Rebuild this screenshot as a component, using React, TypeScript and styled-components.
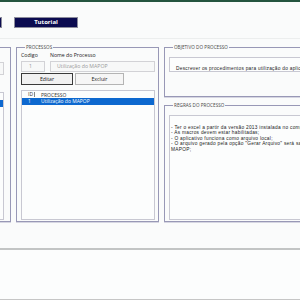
import React from 'react'
import styled, { createGlobalStyle } from 'styled-components'

const GlobalStyle = createGlobalStyle`
    html, body {
        margin: 0;
        padding: 0;
        background: #fafbfb;
    }
    body {
        font-family: "Open Sans", "Noto Sans", sans-serif;
        color: #222;
    }
`

const Page = styled.div`
    width: 300px;
    height: 300px;
    overflow: hidden;
    display: grid;
    grid-template-rows: 2px 37px 211px 50px;
    background: #fafbfb;
`

const TopLine = styled.div`
    background: #24543f;
`

const Header = styled.div`
    display: flex;
    align-items: flex-start;
    gap: 12px;
    padding-top: 15px;
    box-sizing: border-box;
    border-bottom: 1px solid #eceeee;
`

const NavButton = styled.button<{ $cut?: boolean }>`
    width: 64px;
    height: 11px;
    margin-left: ${p => (p.$cut ? '-62px' : '0')};
    padding: 0;
    border: 1px solid #8c8c9c;
    background: #0b0b50;
    color: #fff;
    font-family: "Open Sans", sans-serif;
    font-weight: 700;
    font-size: 6px;
    line-height: 9px;
    text-align: center;
`

const Content = styled.div`
    display: flex;
    align-items: stretch;
    gap: 5px;
    padding: 6px 0 26px 0;
    box-sizing: border-box;
    border-bottom: 2px solid #c2c4c4;
    min-height: 0;
`

const Group = styled.fieldset<{ $w: number }>`
    margin: 0;
    padding: 1px 3px 1px 4px;
    width: ${p => p.$w}px;
    flex-shrink: 0;
    box-sizing: border-box;
    border: 1px solid #9898b6;
    box-shadow: 0 1px 0 #d6d6e2;
    display: flex;
    flex-direction: column;
    min-width: 0;
`

const Legend = styled.legend`
    font-size: 4.6px;
    line-height: 5px;
    padding: 0 1px;
    margin-left: 4px;
    color: #444;
    letter-spacing: 0.05px;
`

const LeftGroup = styled(Group)`
    margin-left: -49px;
`

const LabelRow = styled.div`
    display: flex;
    gap: 5px;
    height: 8px;
    align-items: center;
    font-size: 5.2px;
`

const Label = styled.span<{ $w: number }>`
    width: ${p => p.$w}px;
`

const InputRow = styled.div`
    display: flex;
    gap: 5px;
    margin-top: 2px;
`

const Input = styled.div<{ $w?: number; $center?: boolean }>`
    width: ${p => (p.$w ? `${p.$w}px` : 'auto')};
    flex: ${p => (p.$w ? '0 0 auto' : '1')};
    height: 11px;
    box-sizing: border-box;
    border: 1px solid #d2d2d6;
    background: #f7f8f8;
    color: #9a9a9a;
    font-size: 5.2px;
    line-height: 9px;
    padding-left: ${p => (p.$center ? '7px' : '6px')};
    white-space: nowrap;
    overflow: hidden;
`

const ButtonRow = styled.div`
    display: flex;
    gap: 2px;
    margin-top: 1px;
`

const ActionButton = styled.button<{ $w: number; $default?: boolean }>`
    width: ${p => p.$w}px;
    height: 12px;
    padding: 0;
    box-sizing: border-box;
    border: 1px solid ${p => (p.$default ? '#3a3a3a' : '#b4b4b4')};
    background: ${p => (p.$default ? '#f1f1f1' : '#f6f6f6')};
    color: #222;
    font-family: "Open Sans", sans-serif;
    font-size: 5.2px;
    line-height: 10px;
`

const List = styled.div<{ $gapTop?: number; $right?: number }>`
    flex: 1;
    margin-top: ${p => p.$gapTop ?? 5}px;
    margin-right: ${p => p.$right ?? 0}px;
    border: 1px solid #c8c8d2;
    background: #fcfdfd;
    display: flex;
    flex-direction: column;
    overflow: hidden;
`

const ListRow = styled.div<{ $selected?: boolean }>`
    display: flex;
    height: ${p => (p.$selected ? '6.5px' : '7px')};
    align-items: center;
    font-size: 5px;
    white-space: nowrap;
    background: ${p => (p.$selected ? '#0d68cf' : 'transparent')};
    color: ${p => (p.$selected ? '#fff' : '#333')};
`

const IdCell = styled.span<{ $head?: boolean }>`
    width: 13px;
    padding-left: 6px;
    flex-shrink: 0;
    box-sizing: border-box;
    height: ${p => (p.$head ? '5px' : 'auto')};
    line-height: ${p => (p.$head ? '5px' : 'normal')};
    border-right: ${p => (p.$head ? '1px solid #888' : '0')};
`

const NameCell = styled.span`
    padding-left: 6px;
`

const LeftInput = styled.div`
    height: 11px;
    margin-top: 11px;
    margin-right: 3px;
    border: 1px solid #d2d2d6;
    background: #f7f8f8;
`

const RightColumn = styled.div`
    width: 180px;
    flex-shrink: 0;
    display: flex;
    flex-direction: column;
    gap: 6px;
`

const TextBox = styled.div<{ $pad: string }>`
    flex: 1;
    margin-top: 6px;
    border: 1px solid #c8c8d2;
    background: #fcfdfd;
    padding: ${p => p.$pad};
    font-family: "Liberation Sans", Arial, sans-serif;
    font-size: 4.8px;
    letter-spacing: 0.27px;
    line-height: 5.4px;
    color: #222;
    overflow: hidden;
`

const Line = styled.div`
    white-space: nowrap;
`

const Footer = styled.div`
    border-bottom: 1px solid #c6c6c6;
    background: #fcfdfd;
`

const rules = [
    '- Ter o excel a partir da versão 2013 instalada no computador;',
    '- As macros devem estar habilitadas;',
    '- O aplicativo funciona como arquivo local;',
    '- O arquivo gerado pela opção "Gerar Arquivo" será salvo na pasta do',
    'MAPOP;',
]

const App: React.FC = () => {
    return (
        <Page>
            <GlobalStyle />
            <TopLine />
            <Header>
                <NavButton $cut aria-label="Início" />
                <NavButton>Tutorial</NavButton>
            </Header>
            <Content>
                <LeftGroup $w={60}>
                    <Legend>&nbsp;</Legend>
                    <LeftInput />
                    <List $gapTop={17} $right={3}>
                        <ListRow />
                        <ListRow $selected />
                    </List>
                </LeftGroup>
                <Group $w={143}>
                    <Legend>PROCESSOS</Legend>
                    <LabelRow>
                        <Label $w={24}>Codigo</Label>
                        <Label $w={100}>Nome do Processo</Label>
                    </LabelRow>
                    <InputRow>
                        <Input $w={24} $center>1</Input>
                        <Input>Utilização do MAPOP</Input>
                    </InputRow>
                    <ButtonRow>
                        <ActionButton $w={52} $default>Editar</ActionButton>
                        <ActionButton $w={49}>Excluir</ActionButton>
                    </ButtonRow>
                    <List>
                        <ListRow>
                            <IdCell $head>ID</IdCell>
                            <NameCell>PROCESSO</NameCell>
                        </ListRow>
                        <ListRow $selected>
                            <IdCell>1</IdCell>
                            <NameCell>Utilização do MAPOP</NameCell>
                        </ListRow>
                    </List>
                </Group>
                <RightColumn>
                    <Group $w={180} style={{ height: 52, flexShrink: 0 }}>
                        <Legend>OBJETIVO DO PROCESSO</Legend>
                        <TextBox $pad="8px 0 0 6px">
                            <Line>Descrever os procedimentos para utilização do aplicativo MAPOP.</Line>
                        </TextBox>
                    </Group>
                    <Group $w={180} style={{ flex: 1 }}>
                        <Legend>REGRAS DO PROCESSO</Legend>
                        <TextBox $pad="9px 0 0 1px">
                            {rules.map(r => (
                                <Line key={r}>{r}</Line>
                            ))}
                        </TextBox>
                    </Group>
                </RightColumn>
            </Content>
            <Footer />
        </Page>
    )
}

export default App
